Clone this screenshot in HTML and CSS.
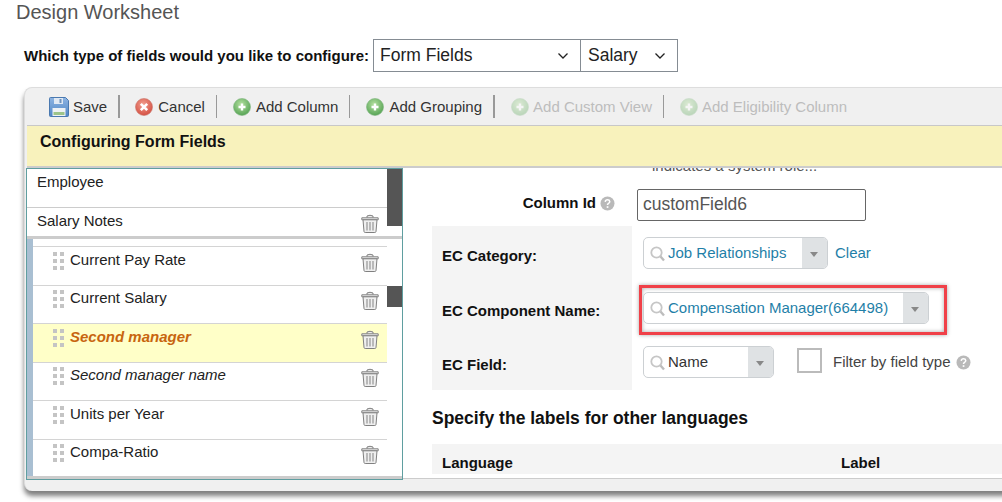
FILE: index.html
```html
<!DOCTYPE html>
<html lang="en">
<head>
    <meta charset="UTF-8">
    <title>Design Worksheet</title>
    <link rel="stylesheet" href="styles.css">
</head>
<body>
    <svg class="icon-defs" width="0" height="0">
        <defs>
            <radialGradient id="greenBall" cx="45%" cy="35%" r="70%">
                <stop offset="0" stop-color="#b5e0a0"/>
                <stop offset="1" stop-color="#4f9f4f"/>
            </radialGradient>
            <radialGradient id="redBall" cx="45%" cy="35%" r="70%">
                <stop offset="0" stop-color="#f2a090"/>
                <stop offset="1" stop-color="#d2493c"/>
            </radialGradient>
            <linearGradient id="diskBlue" x1="0" y1="0" x2="0" y2="1">
                <stop offset="0" stop-color="#8db4e2"/>
                <stop offset="1" stop-color="#4f86c6"/>
            </linearGradient>
            <symbol id="add" viewBox="0 0 18 18">
                <circle cx="9" cy="9" r="8.5" fill="url(#greenBall)" stroke="#7fb67f" stroke-width="0.6"/>
                <path d="M9 5.5v7M5.5 9h7" stroke="#fff" stroke-width="2.4"/>
            </symbol>
            <symbol id="cancel" viewBox="0 0 18 18">
                <circle cx="9" cy="9" r="8.5" fill="url(#redBall)" stroke="#c9776c" stroke-width="0.6"/>
                <path d="M5.8 5.8l6.4 6.4M12.2 5.8l-6.4 6.4" stroke="#fff" stroke-width="2.6"/>
            </symbol>
            <symbol id="disk" viewBox="0 0 20 20">
                <path d="M1.5 0.5h15l3 3v15a1 1 0 0 1-1 1h-17a1 1 0 0 1-1-1v-17a1 1 0 0 1 1-1z" fill="url(#diskBlue)" stroke="#4a79b0"/>
                <rect x="5" y="1" width="9" height="6" fill="#dfe8f3"/>
                <rect x="10.5" y="2" width="2" height="4" fill="#6f93bd"/>
                <rect x="3.5" y="11" width="13" height="8" fill="#eef2f5"/>
                <rect x="4.5" y="15" width="11" height="3" fill="#9dc48a"/>
            </symbol>
            <symbol id="trash" viewBox="0 0 18 19">
                <path d="M0.800 3.800h16.400v2h-16.400zM6 3.500V2q3-1.500 6 0v1.500" fill="#eee" stroke="#808080"/>
                <path d="M2 5.800l1 11.700q0.200 1 1.200 1h9.600q1 0 1.200-1l1-11.700z" fill="#efefef" stroke="#808080"/>
                <path d="M6 8v8.500M9 8v8.500M12 8v8.500" stroke="#a8a8a8" stroke-width="1.500"/>
            </symbol>
            <symbol id="grip" viewBox="0 0 11 19">
                <path d="M0 0h4v4H0zM7 0h4v4H7zM0 7h4v4H0zM7 7h4v4H7zM0 14h4v4H0zM7 14h4v4H7z" fill="#c4c4c4"/>
            </symbol>
            <symbol id="search" viewBox="0 0 15 16">
                <circle cx="6.500" cy="6.500" r="5.200" fill="none" stroke="#c6c6c6" stroke-width="1.800"/>
                <path d="M10.500 10.500l3.500 4" stroke="#bdbdbd" stroke-width="2.400"/>
            </symbol>
            <symbol id="help" viewBox="0 0 15 15">
                <circle cx="7.500" cy="7.500" r="7" fill="#b9b9b9"/>
                <path d="M5.200 5.800q0.300-2 2.300-2t2.300 1.800q0 1.100-1.200 1.700t-1.100 1.700" fill="none" stroke="#fff" stroke-width="1.500"/>
                <rect x="6.700" y="10.200" width="1.700" height="1.700" fill="#fff"/>
            </symbol>
            <symbol id="chevron" viewBox="0 0 10 6">
                <path d="M0.500 0.500l4.500 4.500 4.500-4.500" fill="none" stroke="#222" stroke-width="1.300"/>
            </symbol>
        </defs>
    </svg>

    <h1 class="page-title">Design Worksheet</h1>

    <div class="type-row">
        <span class="type-label">Which type of fields would you like to configure:</span>
        <div class="fake-select select-type">
            <span>Form Fields</span>
            <svg class="chevron"><use href="#chevron"/></svg>
        </div>
        <div class="fake-select select-name">
            <span>Salary</span>
            <svg class="chevron"><use href="#chevron"/></svg>
        </div>
    </div>

    <main class="panel">
        <div class="toolbar">
            <span class="tool tool-save"><svg class="disk-icon"><use href="#disk"/></svg>Save</span>
            <span class="tool tool-cancel"><svg class="ball-icon"><use href="#cancel"/></svg>Cancel</span>
            <span class="tool tool-column"><svg class="ball-icon"><use href="#add"/></svg>Add Column</span>
            <span class="tool tool-grouping"><svg class="ball-icon"><use href="#add"/></svg>Add Grouping</span>
            <span class="tool tool-view disabled"><svg class="ball-icon"><use href="#add"/></svg>Add Custom View</span>
            <span class="tool tool-eligibility disabled"><svg class="ball-icon"><use href="#add"/></svg>Add Eligibility Column</span>
        </div>
        <div class="banner">Configuring Form Fields</div>

        <div class="config">
            <section class="field-list">
                <div class="thumb thumb-top"></div>
                <div class="thumb thumb-mid"></div>
                <div class="group-row group-employee"><span>Employee</span></div>
                <div class="group-row group-notes">
                    <span>Salary Notes</span>
                    <svg class="trash"><use href="#trash"/></svg>
                </div>
                <div class="group-items">
                    <div class="item">
                        <svg class="grip"><use href="#grip"/></svg>
                        <span class="item-name">Current Pay Rate</span>
                        <svg class="trash"><use href="#trash"/></svg>
                    </div>
                    <div class="item">
                        <svg class="grip"><use href="#grip"/></svg>
                        <span class="item-name">Current Salary</span>
                        <svg class="trash"><use href="#trash"/></svg>
                    </div>
                    <div class="item selected">
                        <svg class="grip"><use href="#grip"/></svg>
                        <span class="item-name">Second manager</span>
                        <svg class="trash"><use href="#trash"/></svg>
                    </div>
                    <div class="item custom">
                        <svg class="grip"><use href="#grip"/></svg>
                        <span class="item-name">Second manager name</span>
                        <svg class="trash"><use href="#trash"/></svg>
                    </div>
                    <div class="item">
                        <svg class="grip"><use href="#grip"/></svg>
                        <span class="item-name">Units per Year</span>
                        <svg class="trash"><use href="#trash"/></svg>
                    </div>
                    <div class="item">
                        <svg class="grip"><use href="#grip"/></svg>
                        <span class="item-name">Compa-Ratio</span>
                        <svg class="trash"><use href="#trash"/></svg>
                    </div>
                </div>
            </section>

            <section class="details">
                <p class="role-note">indicates a system role...</p>
                <div class="column-id">
                    <label class="column-label" for="columnId">Column Id</label>
                    <svg class="help"><use href="#help"/></svg>
                    <input class="column-input" id="columnId" type="text" value="customField6">
                </div>

                <div class="ec-grid">
                    <div class="ec-label ec-first">EC Category:</div>
                    <div class="ec-value ec-first value-category">
                        <div class="combo combo-category">
                            <svg class="search"><use href="#search"/></svg>
                            <span class="combo-text">Job Relationships</span>
                            <span class="combo-arrow"></span>
                        </div>
                        <a class="clear-link">Clear</a>
                    </div>

                    <div class="ec-label ec-second">EC Component Name:</div>
                    <div class="ec-value ec-second">
                        <div class="callout">
                            <div class="combo combo-component">
                                <svg class="search"><use href="#search"/></svg>
                                <span class="combo-text">Compensation Manager(664498)</span>
                                <span class="combo-arrow"></span>
                            </div>
                        </div>
                    </div>

                    <div class="ec-label ec-third">EC Field:</div>
                    <div class="ec-value ec-third value-field">
                        <div class="combo combo-field">
                            <svg class="search"><use href="#search"/></svg>
                            <span class="combo-text plain">Name</span>
                            <span class="combo-arrow"></span>
                        </div>
                        <span class="checkbox"></span>
                        <span class="filter-text">Filter by field type</span>
                        <svg class="help"><use href="#help"/></svg>
                    </div>
                </div>

                <h2 class="lang-title">Specify the labels for other languages</h2>
                <div class="lang-head">
                    <span class="lang-col">Language</span>
                    <span>Label</span>
                </div>
            </section>
        </div>
    </main>
</body>
</html>
```

FILE: styles.css
```css
html, body {
    height: 100%;
}
body {
    font-family: 'Liberation Sans', Arial, sans-serif;
    font-size: 15px;
    color: #222;
    background-color: white;
    margin: 0;
    overflow: hidden;
}
.icon-defs {
    position: absolute;
}
.page-title {
    font-size: 20px;
    font-weight: normal;
    line-height: 24px;
    color: #555;
    margin: 0 0 0 16px;
}
.type-row {
    display: flex;
    align-items: center;
    height: 33px;
    margin: 15px 0 0 24px;
}
.type-label {
    font-weight: bold;
    color: #111;
    margin-right: 4px;
    white-space: nowrap;
}
.fake-select {
    display: flex;
    align-items: center;
    justify-content: space-between;
    box-sizing: border-box;
    height: 33px;
    padding: 0 12px 0 6px;
    border: 1px solid #858c93;
    font-size: 17.500px;
    color: #222;
}
.select-type {
    width: 208px;
}
.select-name {
    width: 98px;
    margin-left: -1px;
    padding-left: 7px;
}
.chevron {
    width: 10px;
    height: 6px;
}

.panel {
    width: 1000px;
    height: 404px;
    box-sizing: border-box;
    margin: 15px 0 0 24px;
    padding-left: 2px;
    background-color: #f0f0f0;
    border-top: 1px solid #ddd;
    border-left: 1px solid #ddd;
    border-radius: 8px 0 0 8px;
    box-shadow: 0 5px 5px rgba(0,0,0,0.5);
}
.toolbar {
    display: flex;
    align-items: center;
    height: 37px;
    border-bottom: 1px solid #c8c8c8;
    white-space: nowrap;
    color: #333;
}
.tool {
    display: flex;
    align-items: center;
    gap: 5px;
    height: 23px;
    box-sizing: border-box;
    border-right: 1px solid #999;
    padding-right: 11px;
    margin-right: 16px;
}
.tool-save {
    gap: 4px;
    margin-left: 22px;
    margin-right: 15px;
    border-right-width: 2px;
}
.tool-grouping {
    border-right-width: 2px;
}
.tool-eligibility {
    border-right: none;
}
.disabled {
    color: #bdbdbd;
    gap: 4px;
}
.disabled .ball-icon {
    opacity: 0.35;
}
.disk-icon {
    width: 20px;
    height: 20px;
}
.ball-icon {
    width: 18px;
    height: 18px;
}
.banner {
    height: 42px;
    box-sizing: border-box;
    padding: 6px 0 0 13px;
    background-color: #f8f2bc;
    border-bottom: 2px solid #ccc;
    font-size: 16px;
    font-weight: bold;
    line-height: 19px;
    color: #111;
}

.config {
    display: flex;
    align-items: flex-start;
    margin-left: -1px;
}
.field-list {
    position: relative;
    flex: none;
    width: 377px;
    height: 312px;
    box-sizing: border-box;
    background-color: white;
    border: 1px solid #5f9ea0;
}
.thumb {
    position: absolute;
    right: 0;
    width: 15px;
    background-color: #555;
}
.thumb-top {
    top: 0;
    height: 57px;
}
.thumb-mid {
    top: 117px;
    height: 21px;
}
.group-row {
    display: flex;
    justify-content: space-between;
    box-sizing: border-box;
    margin-right: 15px;
    padding-left: 10px;
    line-height: 18px;
}
.group-employee {
    height: 39px;
    padding-top: 4px;
    border-bottom: 1px solid #ccc;
}
.group-notes {
    height: 28px;
    padding-top: 4px;
    padding-right: 8px;
}
.group-items {
    box-sizing: border-box;
    height: 243px;
    padding-top: 7px;
    border-top: 3px solid #ccc;
    border-bottom: 3px solid #ccc;
    background: linear-gradient(#a9bfd2, #a9bfd2) left top / 6px 100% no-repeat;
}
.item {
    display: flex;
    box-sizing: border-box;
    height: 39px;
    margin: 0 15px 0 6px;
    padding: 4px 8px 0 20px;
    border-top: 1px solid #d4d4d4;
    line-height: 18px;
}
.item:nth-child(even) {
    height: 38px;
    padding-top: 3px;
}
.item:last-child {
    height: 36px;
}
.item-name {
    flex: 1;
    margin-left: 6px;
}
.grip {
    flex: none;
    width: 11px;
    height: 19px;
    margin-top: 1px;
}
.trash {
    flex: none;
    width: 18px;
    height: 19px;
    margin-top: 2px;
}
.selected {
    background-color: #ffffc8;
}
.selected .item-name {
    font-weight: bold;
    font-style: italic;
    color: #c8650f;
}
.custom .item-name {
    font-style: italic;
}

.details {
    flex: 1;
    height: 311px;
    box-sizing: border-box;
    padding-left: 29px;
    background-color: white;
    border-bottom: 1px solid #ccc;
    overflow: hidden;
}
.role-note {
    margin: -11px 0 0 220px;
    font-size: 15px;
    line-height: 18px;
    color: #555;
    white-space: nowrap;
}
.column-id {
    display: flex;
    align-items: flex-start;
    height: 32px;
    margin-top: 14px;
}
.column-label {
    width: 164px;
    margin-top: 5px;
    text-align: right;
    font-weight: bold;
    color: #111;
}
.column-id .help {
    margin: 7px 0 0 4px;
}
.help {
    flex: none;
    width: 15px;
    height: 15px;
}
.column-input {
    box-sizing: border-box;
    width: 229px;
    height: 32px;
    margin-left: 22px;
    padding: 0 5px 2px;
    border: 1px solid #666;
    border-radius: 2px;
    font-family: inherit;
    font-size: 17.500px;
    color: #555;
    outline: none;
}

.ec-grid {
    display: grid;
    grid-template-columns: 200px 1fr;
    grid-template-rows: 59px 52px 53px;
    margin-top: 5px;
}
.ec-label {
    display: flex;
    align-items: center;
    padding-left: 10px;
    background-color: #f4f4f4;
    font-weight: bold;
    color: #111;
}
.ec-label.ec-second {
    padding-bottom: 1px;
}
.ec-label.ec-third {
    padding-top: 1px;
}
.ec-value {
    padding-left: 11px;
}
.value-category {
    display: flex;
    align-items: flex-start;
    padding-top: 11px;
}
.value-field {
    display: flex;
    align-items: flex-start;
    padding-top: 9px;
}
.combo {
    display: flex;
    align-items: stretch;
    flex: none;
    box-sizing: border-box;
    height: 32px;
    border: 1px solid #ccd0d3;
    border-radius: 5px;
    background-color: white;
    overflow: hidden;
}
.combo-category {
    width: 185px;
}
.combo-component {
    width: 286px;
}
.combo-field {
    width: 131px;
}
.search {
    flex: none;
    width: 15px;
    height: 16px;
    margin: 8px 3px 0 6px;
}
.combo-text {
    flex: 1;
    line-height: 30px;
    color: #1f7fa8;
    white-space: nowrap;
}
.combo-text.plain {
    color: #333;
}
.combo-arrow {
    position: relative;
    flex: none;
    width: 25px;
    background-color: #dfe2e4;
}
.combo-arrow::after {
    content: "";
    position: absolute;
    left: 8px;
    top: 14px;
    border-left: 4px solid transparent;
    border-right: 4px solid transparent;
    border-top: 5px solid #888;
}
.clear-link {
    margin-left: 7px;
    line-height: 32px;
    color: #1f7fa8;
}
.callout {
    display: inline-block;
    box-sizing: border-box;
    margin-left: -4px;
    padding: 4px 15px 8px 1px;
    border: 3px solid #f04048;
    box-shadow: 0 0 4px rgba(0,0,0,0.35), inset 0 0 4px rgba(0,0,0,0.35);
}
.checkbox {
    flex: none;
    box-sizing: border-box;
    width: 25px;
    height: 25px;
    margin: 2px 0 0 23px;
    border: 2px solid #bbb;
    background-color: white;
}
.filter-text {
    margin-left: 11px;
    line-height: 32px;
    color: #444;
    white-space: nowrap;
}
.value-field .help {
    margin: 9px 0 0 5px;
}

.lang-title {
    margin: 18px 0 0;
    font-size: 17.500px;
    line-height: 20px;
    color: #111;
}
.lang-head {
    display: flex;
    align-items: center;
    height: 30px;
    margin-top: 16px;
    padding: 6px 0 0 10px;
    box-sizing: border-box;
    background-color: #f4f4f4;
    font-weight: bold;
    color: #111;
}
.lang-col {
    width: 399px;
}
```
